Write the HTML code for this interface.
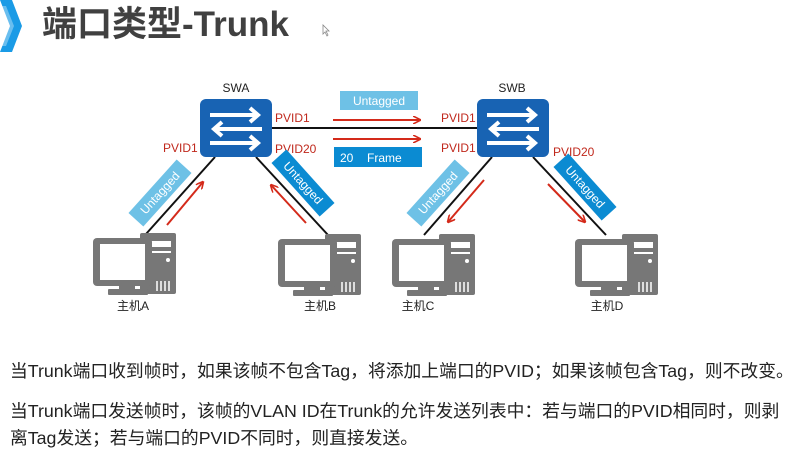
<!DOCTYPE html>
<html><head><meta charset="utf-8"><style>
body{margin:0;width:800px;height:453px;background:#fff;overflow:hidden;position:relative;font-family:"Liberation Sans","Noto Sans CJK SC",sans-serif}
.t{position:absolute;left:42px;top:-4px;font-size:35px;font-weight:bold;color:#404040;letter-spacing:0px}
.p{position:absolute;left:10px;font-size:17.8px;color:#222;white-space:nowrap}
</style></head><body>
<svg width="800" height="453" style="position:absolute;left:0;top:0" font-family="Liberation Sans, Noto Sans CJK SC, sans-serif">
<path d="M0,0 L12,0 L22,26 L12,52 L0,52 L10,26 Z" fill="#1a9be6"/>
<path d="M0,6 L6,6 L14,26 L6,46 L0,46 Z" fill="#fff" opacity="0.35"/>
<defs>
<marker id="ar" markerWidth="8" markerHeight="8" refX="7" refY="4" orient="auto" markerUnits="userSpaceOnUse"><path d="M0,0 L8,4 L0,8" fill="none" stroke="#d42a1a" stroke-width="1.6"/></marker>
<g id="pc">
<rect x="47" y="0" width="36" height="61" rx="2" fill="#777"/>
<rect x="52" y="8" width="26" height="6" fill="#fff"/>
<rect x="52" y="18" width="26" height="2" fill="#fff"/>
<circle cx="75" cy="27" r="2" fill="#fff"/>
<rect x="0" y="5" width="59" height="48" rx="4" fill="#777"/>
<rect x="7" y="11" width="45" height="36" fill="#fff"/>
<rect x="26" y="52" width="16" height="5" fill="#777"/>
<rect x="15" y="56" width="40" height="6" rx="1" fill="#777"/>
<path d="M64,48v10M68,48v10M72,48v10M76,48v10" stroke="#fff" stroke-width="1.5"/>
</g>
<g id="sw">
<rect x="0" y="0" width="72" height="58" rx="6" fill="#1863b3"/>
<path d="M10,16H58M50,9L58,16L50,23" stroke="#fff" stroke-width="4" fill="none"/>
<path d="M62,30H14M22,23L14,30L22,37" stroke="#fff" stroke-width="4" fill="none"/>
<path d="M10,44H58M50,37L58,44L50,51" stroke="#fff" stroke-width="4" fill="none"/>
</g>
</defs>
<line x1="272" y1="128" x2="477" y2="128" stroke="#111" stroke-width="2"/>
<line x1="215" y1="157" x2="146" y2="234" stroke="#111" stroke-width="2"/>
<line x1="256" y1="157" x2="328" y2="235" stroke="#111" stroke-width="2"/>
<line x1="492" y1="157" x2="424" y2="235" stroke="#111" stroke-width="2"/>
<line x1="533" y1="157" x2="606" y2="235" stroke="#111" stroke-width="2"/>
<use href="#sw" x="200" y="99"/>
<use href="#sw" x="477" y="99"/>
<text x="236" y="92" font-size="12" text-anchor="middle" fill="#222">SWA</text>
<text x="512" y="92" font-size="12" text-anchor="middle" fill="#222">SWB</text>
<g font-size="12" fill="#c0281c">
<text x="275" y="122">PVID1</text><text x="163" y="152">PVID1</text><text x="275" y="153">PVID20</text>
<text x="441" y="122">PVID1</text><text x="441" y="152">PVID1</text><text x="553" y="156">PVID20</text>
</g>
<rect x="340" y="91" width="78" height="19" fill="#6ec1e6"/>
<text x="379" y="105" font-size="12" fill="#fff" text-anchor="middle">Untagged</text>
<rect x="334" y="147" width="88" height="20" fill="#0b8bd2"/>
<text x="340" y="162" font-size="12" fill="#fff">20</text><text x="367" y="162" font-size="12" fill="#fff">Frame</text>
<g stroke="#d42a1a" stroke-width="2" marker-end="url(#ar)">
<line x1="333" y1="120" x2="420" y2="120"/><line x1="333" y1="139" x2="420" y2="139"/>
<line x1="167" y1="225" x2="203" y2="182"/>
<line x1="306" y1="223" x2="271" y2="185"/>
<line x1="484" y1="180" x2="448" y2="222"/>
<line x1="548" y1="184" x2="585" y2="222"/>
</g>
<g font-size="12" fill="#fff" text-anchor="middle">
<g transform="translate(160,193) rotate(-48)"><rect x="-36" y="-10" width="72" height="20" fill="#6ec1e6"/><text y="4">Untagged</text></g>
<g transform="translate(303,183) rotate(48)"><rect x="-36" y="-10" width="72" height="20" fill="#0b8bd2"/><text y="4">Untagged</text></g>
<g transform="translate(438,193) rotate(-48)"><rect x="-36" y="-10" width="72" height="20" fill="#6ec1e6"/><text y="4">Untagged</text></g>
<g transform="translate(585,187) rotate(48)"><rect x="-36" y="-10" width="72" height="20" fill="#0b8bd2"/><text y="4">Untagged</text></g>
</g>
<use href="#pc" x="93" y="233"/>
<use href="#pc" x="278" y="234"/>
<use href="#pc" x="392" y="234"/>
<use href="#pc" x="575" y="234"/>
<g font-size="12" fill="#222" text-anchor="middle">
<text x="133" y="310">主机A</text><text x="320" y="310">主机B</text><text x="418" y="310">主机C</text><text x="607" y="310">主机D</text>
</g>
<path d="M323,25l0,9l2,-2l2,4l1,-1l-2,-4l3,0z" fill="#fff" stroke="#888" stroke-width="0.8"/>
</svg>
<div class="t">端口类型-Trunk</div>
<div class="p" style="top:357px">当Trunk端口收到帧时，如果该帧不包含Tag，将添加上端口的PVID；如果该帧包含Tag，则不改变。</div>
<div class="p" style="top:397px">当Trunk端口发送帧时，该帧的VLAN ID在Trunk的允许发送列表中：若与端口的PVID相同时，则剥</div>
<div class="p" style="top:424px">离Tag发送；若与端口的PVID不同时，则直接发送。</div>
</body></html>
